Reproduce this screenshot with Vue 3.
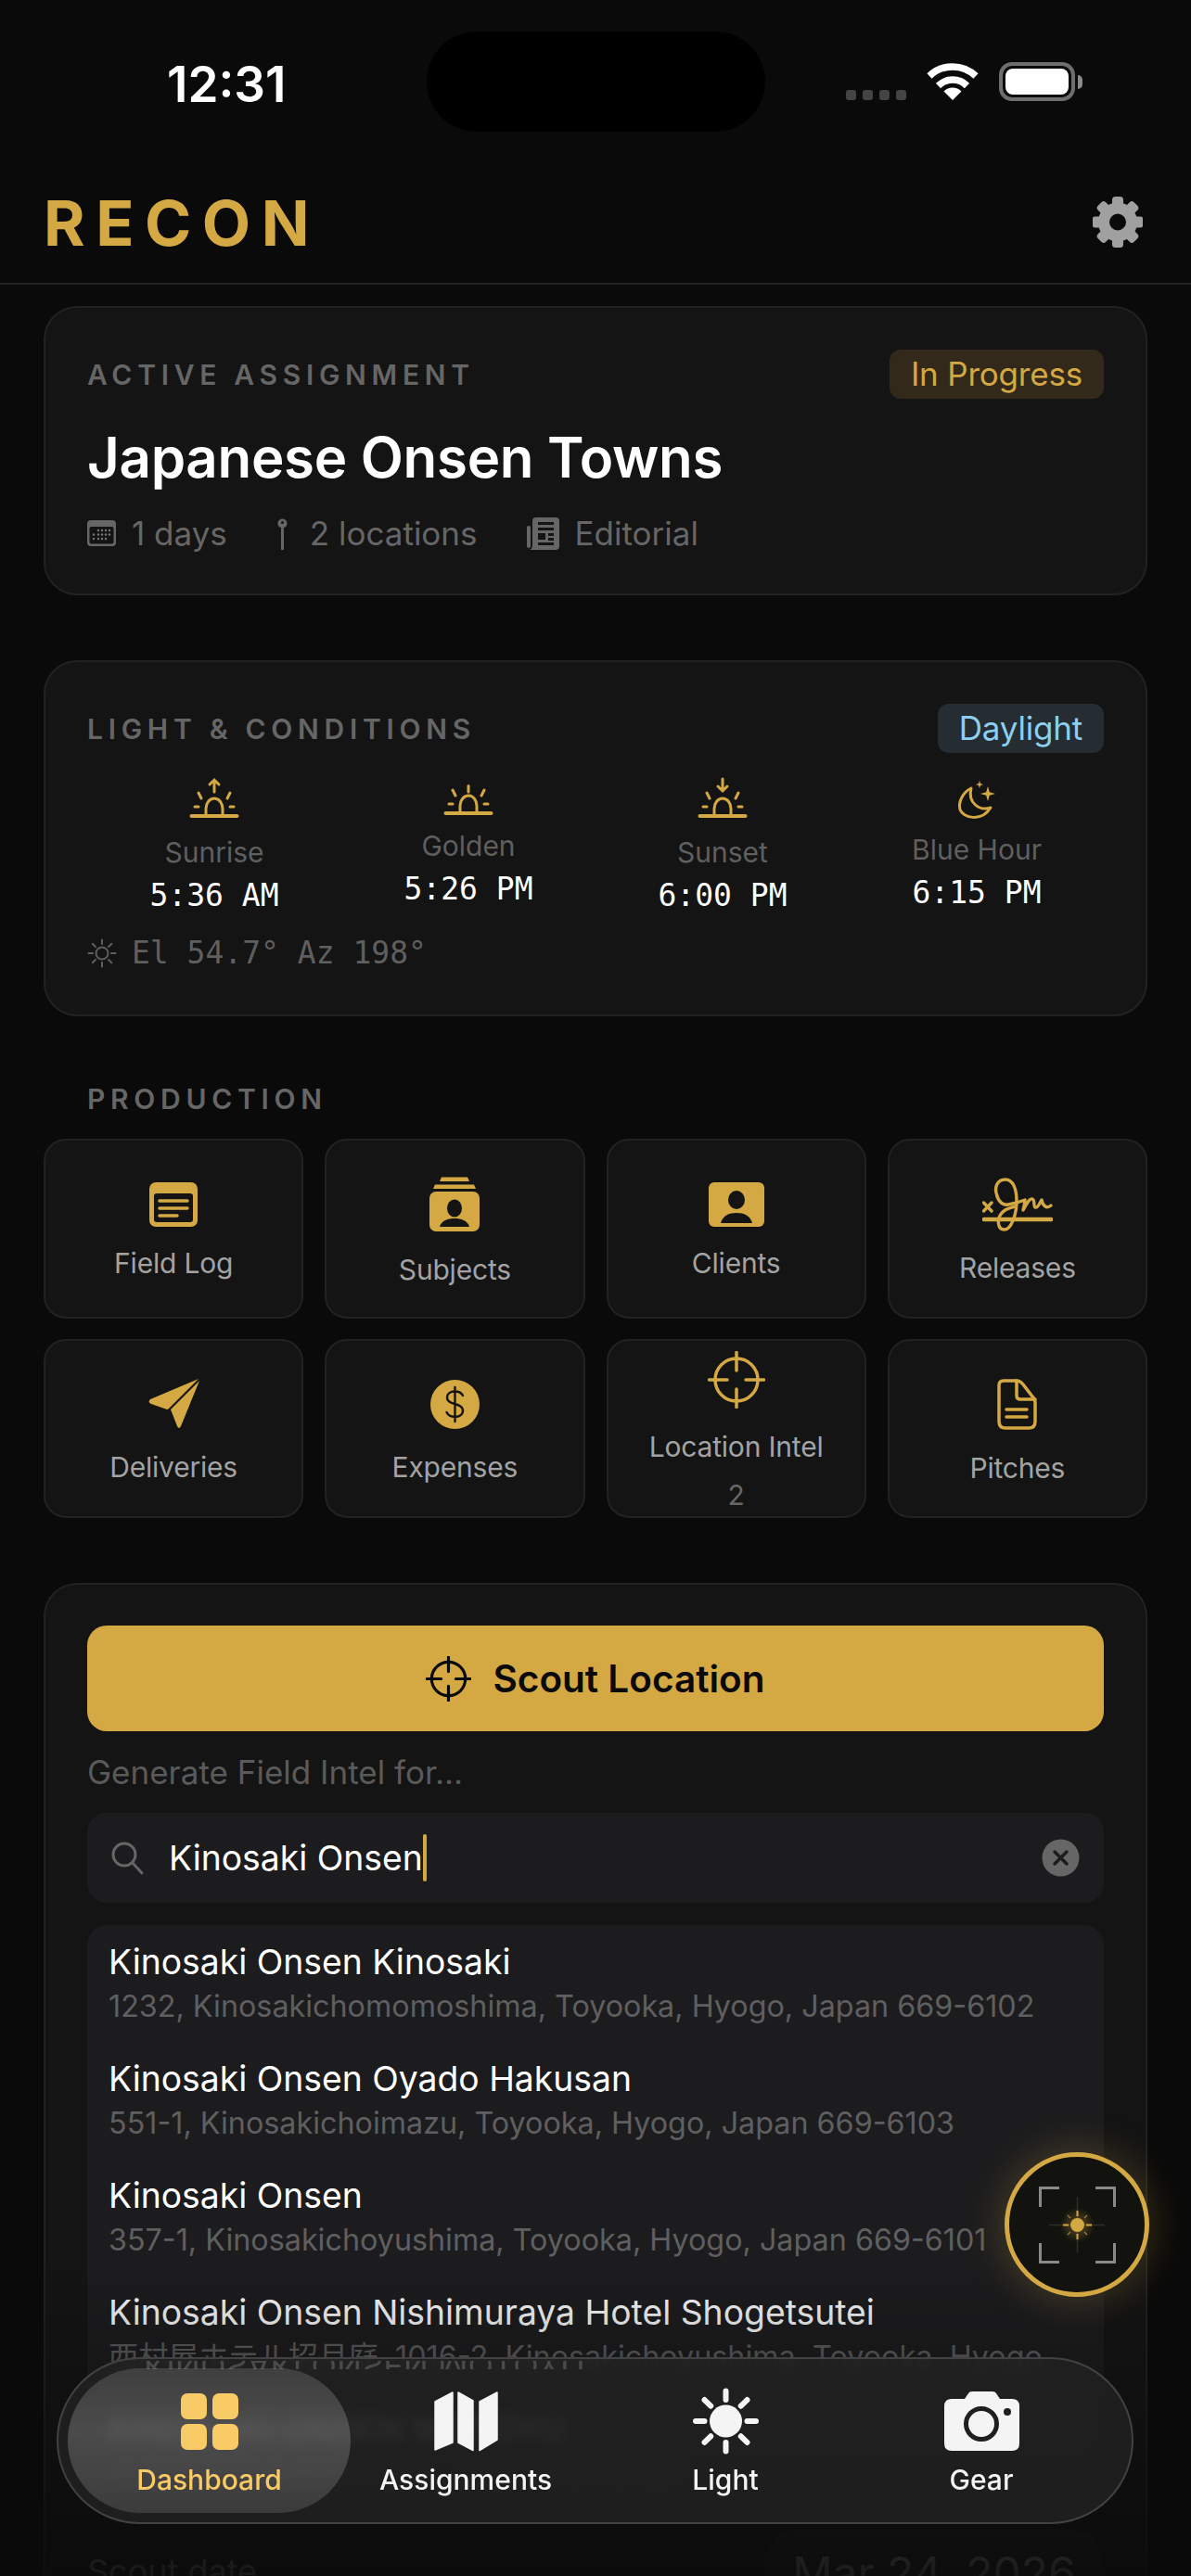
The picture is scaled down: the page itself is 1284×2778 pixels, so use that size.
<script setup>
const sunTimes = [
  { label: 'Sunrise', time: '5:36 AM', kind: 'rise' },
  { label: 'Golden', time: '5:26 PM', kind: 'golden' },
  { label: 'Sunset', time: '6:00 PM', kind: 'set' },
  { label: 'Blue Hour', time: '6:15 PM', kind: 'blue' }
]

// h is the height of the icon slot, labels sit right under it
const tiles = [
  { label: 'Field Log', icon: 'log', h: 58 },
  { label: 'Subjects', icon: 'subjects', h: 72 },
  { label: 'Clients', icon: 'clients', h: 58 },
  { label: 'Releases', icon: 'releases', h: 68 },
  { label: 'Deliveries', icon: 'plane', h: 67 },
  { label: 'Expenses', icon: 'dollar', h: 67 },
  { label: 'Location Intel', icon: 'target', h: 75, count: 2 },
  { label: 'Pitches', icon: 'doc', h: 69 }
]

const places = [
  { name: 'Kinosaki Onsen Kinosaki', addr: '1232, Kinosakichomomoshima, Toyooka, Hyogo, Japan 669-6102' },
  { name: 'Kinosaki Onsen Oyado Hakusan', addr: '551-1, Kinosakichoimazu, Toyooka, Hyogo, Japan 669-6103' },
  { name: 'Kinosaki Onsen', addr: '357-1, Kinosakichoyushima, Toyooka, Hyogo, Japan 669-6101' },
  { name: 'Kinosaki Onsen Nishimuraya Hotel Shogetsutei', addr: '西村屋ホテル招月庭, 1016-2, Kinosakichoyushima, Toyooka, Hyogo' },
  { name: 'KINOSAKI ONSEN MOTOYU', addr: '兵庫県豊岡市城崎町湯島, Toyooka, Hyogo' }
]

const gearTeeth = [0, 45, 90, 135, 180, 225, 270, 315]
const sunRays = [0, 45, 90, 135, 180, 225, 270, 315]
</script>

<template>
  <div class="screen">
    <div class="status-bar">
      <span class="clock">12:31</span>
      <div class="island"></div>
      <div class="signal">
        <i></i><i></i><i></i><i></i>
      </div>
      <svg class="wifi" width="56" height="41" viewBox="0 0 56 41">
        <path d="M3 15 A36 36 0 0 1 53 15" fill="none" stroke="#fff" stroke-width="7.5" />
        <path d="M12.5 25.5 A22 22 0 0 1 43.5 25.5" fill="none" stroke="#fff" stroke-width="7.5" />
        <path d="M28 41 L18.5 31.5 A13.5 13.5 0 0 1 37.5 31.5 Z" fill="#fff" />
      </svg>
      <div class="battery"><div class="battery-fill"></div></div>
      <div class="battery-cap"></div>
    </div>

    <header class="top-bar">
      <h1 class="logo">RECON</h1>
      <svg width="54" height="55" viewBox="0 0 54 55">
        <g fill="#a0a0a0">
          <rect v-for="a in gearTeeth" :key="a" x="21" y="0" width="12" height="14" rx="3.5" :transform="`rotate(${a} 27 27.5)`" />
        </g>
        <circle cx="27" cy="27.5" r="15" fill="none" stroke="#a0a0a0" stroke-width="12" />
      </svg>
    </header>

    <main class="content">
      <section class="card assignment">
        <div class="card-head">
          <span class="section-label">ACTIVE ASSIGNMENT</span>
          <span class="badge badge-gold">In Progress</span>
        </div>
        <h2 class="title">Japanese Onsen Towns</h2>
        <div class="meta">
          <span class="meta-item">
            <svg width="31" height="28" viewBox="0 0 31 28">
              <rect x="0" y="0" width="31" height="28" rx="4" fill="#666" />
              <rect x="2.5" y="7" width="26" height="18.5" rx="2" fill="#141414" />
              <g fill="#777">
                <circle v-for="x in [12, 16, 20, 24]" :key="'a' + x" :cx="x" cy="11" r="1.2" />
                <circle v-for="x in [7, 12, 16, 20, 24]" :key="'b' + x" :cx="x" cy="15.5" r="1.2" />
                <circle v-for="x in [7, 12, 16, 20]" :key="'c' + x" :cx="x" cy="20" r="1.2" />
              </g>
            </svg>
            1 days
          </span>
          <span class="meta-item">
            <svg class="pin" width="13" height="35" viewBox="0 0 13 35">
              <circle cx="6.5" cy="6.5" r="5" fill="#666" />
              <circle cx="6.5" cy="5.5" r="1.5" fill="#141414" />
              <path d="M6.5 12 V34" stroke="#666" stroke-width="3" stroke-linecap="round" />
            </svg>
            2 locations
          </span>
          <span class="meta-item">
            <svg width="35" height="35" viewBox="0 0 35 35">
              <rect x="0" y="9" width="4" height="24" rx="2" fill="#666" />
              <path d="M6 4 Q6 0 10 0 H31 Q35 0 35 4 V31 Q35 35 31 35 H3 Q6 34 6 30 Z" fill="#666" />
              <g fill="#141414">
                <rect x="12" y="5" width="17" height="3" />
                <rect x="12" y="11" width="17" height="3" />
                <rect x="12" y="17" width="8" height="7" />
                <rect x="23" y="17" width="6" height="3" />
                <rect x="23" y="22" width="6" height="3" />
                <rect x="12" y="27" width="17" height="3" />
              </g>
            </svg>
            Editorial
          </span>
        </div>
      </section>

      <section class="card light">
        <div class="card-head">
          <span class="section-label">LIGHT &amp; CONDITIONS</span>
          <span class="badge badge-blue">Daylight</span>
        </div>
        <div class="sun-grid">
          <div v-for="s in sunTimes" :key="s.label" class="sun-col">
            <svg v-if="s.kind === 'rise' || s.kind === 'set'" class="sun-icon tall" width="52" height="44" viewBox="0 0 52 44" fill="none" stroke="#d4a843" stroke-width="3" stroke-linecap="round">
              <path d="M1.5 41 H50.5" stroke-width="4" />
              <path d="M17 39 V33 A9 11 0 0 1 35 33 V39" />
              <path d="M5 31 H9 M43 31 H47 M9 16 L12 22 M43 16 L40 22" />
              <path v-if="s.kind === 'rise'" d="M26 2 V15 M21 7 L26 2 L31 7" />
              <path v-else d="M26 1 V14 M21 9 L26 14 L31 9" />
            </svg>
            <svg v-else-if="s.kind === 'golden'" class="sun-icon short" width="52" height="34" viewBox="0 0 52 34" fill="none" stroke="#d4a843" stroke-width="3" stroke-linecap="round">
              <path d="M1.5 31 H50.5" stroke-width="4" />
              <path d="M17 29 V23 A9 11 0 0 1 35 23 V29" />
              <path d="M5 21 H9 M43 21 H47 M9 6 L12 12 M43 6 L40 12 M26 1.5 V8" />
            </svg>
            <svg v-else class="sun-icon mid" width="40" height="41" viewBox="0 0 40 41" fill="none" stroke="#d4a843" stroke-width="3" stroke-linejoin="round">
              <path d="M14 8 C4 13 0 24 2 31 C5 40 25 45 35 29 C23 33 10 24 14 8 Z" />
              <path d="M32 6 L33.8 12.2 L40 14 L33.8 15.800 L32 22 L30.2 15.800 L24 14 L30.2 12.2 Z" fill="#d4a843" stroke="none" />
              <path d="M23 0 L24 3 L27 4 L24 5 L23 8 L22 5 L19 4 L22 3 Z" fill="#d4a843" stroke="none" />
            </svg>
            <span class="sun-label">{{ s.label }}</span>
            <span class="sun-time">{{ s.time }}</span>
          </div>
        </div>
        <div class="sun-pos">
          <svg width="32" height="32" viewBox="0 0 32 32" fill="none" stroke="#5f5f5f" stroke-width="2" stroke-linecap="round">
            <circle cx="16" cy="16" r="6.5" />
            <path v-for="a in sunRays" :key="a" d="M16 1.5 V6" :transform="`rotate(${a} 16 16)`" />
          </svg>
          <span>El 54.7° Az 198°</span>
        </div>
      </section>

      <div class="production-label section-label">PRODUCTION</div>
      <div class="tile-grid">
        <div v-for="t in tiles" :key="t.label" class="tile">
          <div class="tile-icon" :style="{ height: t.h + 'px' }">
            <svg v-if="t.icon === 'log'" width="52" height="48" viewBox="0 0 52 48">
              <rect width="52" height="48" rx="7" fill="#d4a843" />
              <rect x="5" y="12" width="42" height="31" rx="3" fill="#141414" />
              <path d="M11 20 H41 M11 28 H41 M11 36 H30" stroke="#d4a843" stroke-width="3.5" stroke-linecap="round" />
            </svg>
            <svg v-else-if="t.icon === 'subjects'" width="54" height="59" viewBox="0 0 54 59">
              <path d="M13 0.5 H41 L43 5 H11 Z M6 8.5 H48 L50 13 H4 Z" fill="#d4a843" />
              <rect y="16" width="54" height="43" rx="7" fill="#d4a843" />
              <ellipse cx="27" cy="34" rx="8" ry="9.5" fill="#141414" />
              <path d="M11 54 C13 47 20 45 27 45 C34 45 41 47 43 54 Z" fill="#141414" />
            </svg>
            <svg v-else-if="t.icon === 'clients'" width="60" height="48" viewBox="0 0 60 48">
              <rect width="60" height="48" rx="6" fill="#d4a843" />
              <ellipse cx="30" cy="19" rx="9" ry="10" fill="#141414" />
              <path d="M13 44 C15 36 22 33 30 33 C38 33 45 36 47 44 Z" fill="#141414" />
            </svg>
            <svg v-else-if="t.icon === 'releases'" width="76" height="58" viewBox="0 0 76 58" fill="none" stroke="#d4a843" stroke-width="3.4" stroke-linecap="round" stroke-linejoin="round">
              <path d="M1.5 45 H74.5" stroke-width="4.500" />
              <path d="M1.5 27 L10 36 M10 27 L1.5 36" />
              <path d="M16 20 C12 9 17 2 25 2 C33 2 37 12 37 25 C37 40 31 56 24 56 C16 56 15 44 22 37 C27 32 31 33 35 31" />
              <path d="M16 20 C18 27 23 30 28 29 C34 28 41 26 46 24 C46 29 44 33 44 35 C48 28 51 22 54 23 C57 24 55 31 57 32 C60 33 62 27 64 24 C65 30 69 34 74 30" />
            </svg>
            <svg v-else-if="t.icon === 'plane'" width="55" height="54" viewBox="0 0 55 54" fill="#d4a843">
              <path d="M54 0 L2 22 Q-1 25 3 27 L20 33 Q21 33 22 32 Z" />
              <path d="M55 2 L24 33 L31 51 Q33 55 35 51 Z" />
            </svg>
            <svg v-else-if="t.icon === 'dollar'" width="53" height="53" viewBox="0 0 53 53">
              <circle cx="26.5" cy="26.5" r="26.5" fill="#d4a843" />
              <path d="M35 17 C33 13 29 12.500 26.500 12.500 C21 12.500 18 15.500 18 19 C18 28 35 24 35 33.500 C35 37.500 31 40 26.500 40 C22 40 19 38 17.500 35 M26.500 8 V45" fill="none" stroke="#141414" stroke-width="2.400" stroke-linecap="round" />
            </svg>
            <svg v-else-if="t.icon === 'target'" width="62" height="62" viewBox="0 0 62 62" fill="none" stroke="#d4a843" stroke-linecap="round">
              <circle cx="31" cy="31" r="23" stroke-width="3.500" />
              <path d="M31 1.500 V21 M31 41 V60.500 M1.500 31 H21 M41 31 H60.500" stroke-width="3.500" />
            </svg>
            <svg v-else width="43" height="55" viewBox="0 0 43 55" fill="none" stroke="#d4a843" stroke-width="3.500" stroke-linejoin="round" stroke-linecap="round">
              <path d="M7 2 H21 Q25 2 28 6 L38 19 Q41 22 41 26 V46 Q41 53 34 53 H9 Q2 53 2 46 V7 Q2 2 7 2 Z" />
              <path d="M21 2 V18 Q21 22 25 22 H41" />
              <path d="M10 33 H32 M10 41 H32" />
            </svg>
          </div>
          <span class="tile-label">{{ t.label }}</span>
          <span v-if="t.count" class="tile-count">{{ t.count }}</span>
        </div>
      </div>

      <section class="card scout">
        <button class="scout-btn">
          <svg width="49" height="49" viewBox="0 0 62 62" fill="none" stroke="#0a0a0a" stroke-linecap="round">
            <circle cx="31" cy="31" r="23" stroke-width="4" />
            <path d="M31 1.500 V21 M31 41 V60.500 M1.500 31 H21 M41 31 H60.500" stroke-width="4" />
          </svg>
          Scout Location
        </button>
        <div class="hint">Generate Field Intel for...</div>
        <div class="search">
          <svg width="35" height="36" viewBox="0 0 35 36" fill="none" stroke="#666" stroke-width="3" stroke-linecap="round">
            <circle cx="14" cy="14" r="12" />
            <path d="M23 23 L33 34" />
          </svg>
          <span class="search-text">Kinosaki Onsen</span>
          <i class="caret"></i>
          <svg class="clear" width="41" height="41" viewBox="0 0 41 41">
            <circle cx="20.500" cy="20.500" r="20" fill="#666" />
            <path d="M14 14 L27 27 M27 14 L14 27" stroke="#1c1c1e" stroke-width="3.500" stroke-linecap="round" />
          </svg>
        </div>
        <ul class="results">
          <li v-for="p in places" :key="p.name" class="result">
            <div class="result-name">{{ p.name }}</div>
            <div class="result-addr">{{ p.addr }}</div>
          </li>
        </ul>
        <div class="date-row">
          <span class="date-label">Scout date</span>
          <span class="date-pill">Mar 24, 2026</span>
        </div>
      </section>
    </main>

    <div class="bottom-fade"></div>

    <button class="fab">
      <svg width="83" height="83" viewBox="0 0 83 83" fill="none">
        <defs>
          <radialGradient id="sun-glow">
            <stop offset="0" stop-color="#d4a843" stop-opacity="0.4" />
            <stop offset="1" stop-color="#d4a843" stop-opacity="0" />
          </radialGradient>
        </defs>
        <path d="M1.500 22 V1.500 H22 M61 1.500 H81.500 V22 M1.500 61 V81.500 H22 M61 81.500 H81.500 V61" stroke="#8a8a8a" stroke-width="3" />
        <path d="M41.500 11 V71 M11 41.500 H71" stroke="#2e2e2a" stroke-width="1.500" />
        <circle cx="41.500" cy="41.500" r="19" fill="url(#sun-glow)" />
        <circle cx="41.500" cy="41.500" r="7.500" fill="#d4a843" />
        <path d="M41.500 26 V32 M41.500 51 V57 M26 41.500 H32 M51 41.500 H57" stroke="#d4a843" stroke-width="2" />
        <path d="M31 31 L34 34 M52 31 L49 34 M31 52 L34 49 M52 52 L49 49" stroke="#a08238" stroke-width="1.200" />
      </svg>
    </button>

    <nav class="tab-bar">
      <div class="bar-sheen"><span>KINOSAKI ONSEN MOTOYU</span></div>
      <div class="tab active">
        <svg width="62" height="72" viewBox="0 0 62 72" fill="#f9cb66">
          <rect x="0" y="6" width="28" height="28" rx="7" />
          <rect x="34" y="6" width="28" height="28" rx="7" />
          <rect x="0" y="39" width="28" height="28" rx="7" />
          <rect x="34" y="39" width="28" height="28" rx="7" />
        </svg>
        <span>Dashboard</span>
      </div>
      <div class="tab">
        <svg width="69" height="72" viewBox="0 -4 69 72" fill="#f4f4f5" stroke="#f4f4f5" stroke-width="1.500" stroke-linejoin="round">
          <path d="M1 11 L20 1 V55 L1 63 Z" />
          <path d="M26 1 L42 10 V63.500 L26 55 Z" />
          <path d="M49 11 L68 1 V52 L49 63.500 Z" />
        </svg>
        <span>Assignments</span>
      </div>
      <div class="tab">
        <svg width="73" height="72" viewBox="0 0 73 72" fill="#f4f4f5">
          <circle cx="36.500" cy="36" r="17.500" />
          <g stroke="#f4f4f5" stroke-width="6" stroke-linecap="round">
            <path v-for="a in sunRays" :key="a" d="M36.500 3.500 V13" :transform="`rotate(${a} 36.500 36)`" />
          </g>
        </svg>
        <span>Light</span>
      </div>
      <div class="tab">
        <svg width="81" height="72" viewBox="0 -4 81 72">
          <path d="M8 8 H22 L26 2 Q27 0 30 0 H52 Q55 0 56 2 L60 8 H73 Q81 8 81 16 V56 Q81 64 73 64 H8 Q0 64 0 56 V16 Q0 8 8 8 Z" fill="#f4f4f5" />
          <circle cx="40" cy="35" r="16.500" fill="#f4f4f5" stroke="#1f1f1f" stroke-width="5" />
          <circle cx="68" cy="22" r="4" fill="#1f1f1f" />
        </svg>
        <span>Gear</span>
      </div>
    </nav>
  </div>
</template>

<style>
html,
body {
  margin: 0;
  background: #0a0a0a;
}
</style>

<style scoped>
* {
  box-sizing: border-box;
}
.screen {
  position: relative;
  width: 1284px;
  height: 2778px;
  overflow: hidden;
  background: #0a0a0a;
  color: #fff;
  font-family: Inter, 'Noto Sans CJK JP', sans-serif;
}

/* status bar */
.status-bar {
  display: flex;
  align-items: flex-start;
  height: 172px;
  padding: 34px 0 0 180px;
}
.clock {
  width: 126px;
  margin-top: 27px;
  font-size: 53px;
  line-height: 60px;
  font-weight: 600;
  white-space: nowrap;
}
.island {
  width: 365px;
  height: 108px;
  margin-left: 154px;
  border-radius: 54px;
  background: #000;
}
.signal {
  display: flex;
  gap: 7px;
  margin: 63px 0 0 87px;
}
.signal i {
  width: 11px;
  height: 11px;
  border-radius: 3px;
  background: #444;
}
.wifi {
  margin: 33px 0 0 22px;
}
.battery {
  width: 82px;
  height: 42px;
  margin: 33px 0 0 22px;
  padding: 3px;
  border: 4px solid #6e6e6e;
  border-radius: 14px;
}
.battery-fill {
  height: 100%;
  border-radius: 8px;
  background: #fff;
}
.battery-cap {
  width: 5px;
  height: 15px;
  margin: 47px 0 0 3px;
  border-radius: 0 5px 5px 0;
  background: #8a8a8a;
}

.top-bar {
  display: flex;
  justify-content: space-between;
  align-items: center;
  height: 135px;
  padding: 2px 52px 0 47px;
  border-bottom: 2px solid #222;
}
.logo {
  margin: 0;
  font-size: 68px;
  line-height: 80px;
  font-weight: 700;
  letter-spacing: 11.500px;
  color: #d4a843;
}

.content {
  padding: 23px 47px 0;
}
.card {
  border: 2px solid #222;
  border-radius: 36px;
  background: #141414;
}
.card-head {
  display: flex;
  justify-content: space-between;
  align-items: center;
}
.section-label {
  font-size: 30px;
  line-height: 38px;
  font-weight: 600;
  letter-spacing: 5.700px;
  color: #666;
}
.badge {
  height: 53px;
  padding: 0 23px;
  border-radius: 12px;
  font-size: 35px;
  line-height: 53px;
  letter-spacing: -0.200px;
}
.badge-gold {
  background: #33291a;
  color: #d4a843;
}
.badge-blue {
  background: #252d33;
  color: #8ccfee;
}

.assignment {
  height: 312px;
  padding: 45px 45px 0;
}
.title {
  margin: 27px 0 0;
  font-size: 60px;
  line-height: 72px;
  font-weight: 600;
  letter-spacing: -0.300px;
}
.meta {
  display: flex;
  gap: 53px;
  margin-top: 24px;
  font-size: 35px;
  line-height: 44px;
  color: #666;
}
.meta-item {
  display: flex;
  align-items: center;
  gap: 17px;
}
.pin {
  margin-right: 6px;
}

.light {
  height: 384px;
  margin-top: 70px;
  padding: 45px 45px 0;
}
.sun-grid {
  display: grid;
  grid-template-columns: repeat(4, 1fr);
  align-items: center;
  margin-top: 27px;
}
.sun-col {
  display: flex;
  flex-direction: column;
  align-items: center;
}
.sun-icon {
  overflow: visible;
}
.sun-icon.short {
  margin-bottom: -4px;
}
.sun-icon.mid {
  margin-bottom: -3px;
}
.sun-label {
  margin-top: 18px;
  font-size: 30px;
  line-height: 36px;
  color: #5f5f5f;
}
.sun-time {
  margin-top: 7px;
  font-family: 'DejaVu Sans Mono', monospace;
  font-size: 33px;
  line-height: 44px;
}
.sun-pos {
  display: flex;
  align-items: center;
  gap: 16px;
  margin-top: 20px;
  font-family: 'DejaVu Sans Mono', monospace;
  font-size: 33px;
  line-height: 40px;
  color: #5f5f5f;
}

.production-label {
  margin: 70px 0 24px 47px;
}
.tile-grid {
  display: grid;
  grid-template-columns: repeat(4, 1fr);
  grid-auto-rows: 193.500px;
  gap: 22px 23px;
}
.tile {
  display: flex;
  flex-direction: column;
  align-items: center;
  justify-content: center;
  border: 2px solid #222;
  border-radius: 24px;
  background: #141414;
}
.tile-icon {
  display: flex;
  align-items: center;
}
.tile-label {
  margin-top: 16px;
  font-size: 30px;
  line-height: 36px;
  letter-spacing: -0.200px;
  color: #a3a3a3;
}
.tile-count {
  margin-top: 16px;
  font-size: 30px;
  line-height: 36px;
  color: #666;
}

.scout {
  margin-top: 70px;
  padding: 44px 45px 0;
  border-bottom: 0;
}
.scout-btn {
  display: flex;
  justify-content: center;
  align-items: center;
  gap: 23px;
  width: 100%;
  height: 114px;
  border: 0;
  border-radius: 21px;
  background: #d4a843;
  color: #0a0a0a;
  font-family: inherit;
  font-size: 40.500px;
  font-weight: 600;
}
.hint {
  margin-top: 24px;
  font-size: 35px;
  line-height: 40px;
  color: #5a5a5a;
}
.search {
  display: flex;
  align-items: center;
  height: 97px;
  margin-top: 24px;
  padding: 0 26px;
  border-radius: 21px;
  background: #1c1c1e;
}
.search-text {
  margin-left: 27px;
  font-size: 37.300px;
  line-height: 44px;
}
.caret {
  width: 4px;
  height: 51px;
  border-radius: 2px;
  background: #d4a843;
}
.clear {
  margin-left: auto;
}
.results {
  margin: 24px 0 0;
  padding: 0;
  list-style: none;
  border-radius: 21px;
  background: #1c1c1e;
}
.result {
  height: 126px;
  padding: 17px 23px 0;
}
.result-name {
  font-size: 37.300px;
  line-height: 46px;
  white-space: nowrap;
}
.result-addr {
  margin-top: 5px;
  font-size: 32.300px;
  line-height: 40px;
  color: #5f5f5f;
  white-space: nowrap;
}
.date-row {
  display: flex;
  justify-content: space-between;
  margin-top: 21px;
}
.date-label {
  margin-top: 24px;
  font-size: 36px;
  color: #666;
}
.date-pill {
  width: 366px;
  height: 100px;
  padding-top: 18px;
  border-radius: 40px;
  background: #1c1c1e;
  text-align: center;
  font-size: 48px;
  line-height: 60px;
  color: #777;
}

/* things that float over the scrolling content */
.bottom-fade {
  position: absolute;
  left: 0;
  right: 0;
  bottom: 0;
  height: 340px;
  background: linear-gradient(rgba(10, 10, 10, 0), rgba(10, 10, 10, 0.85));
}
.fab {
  position: absolute;
  right: 45px;
  bottom: 301px;
  display: flex;
  align-items: center;
  justify-content: center;
  width: 156px;
  height: 156px;
  padding: 0;
  border: 5px solid #d4a843;
  border-radius: 50%;
  background: #12120e;
  box-shadow: 0 0 44px rgba(212, 168, 67, 0.28);
}
.tab-bar {
  position: absolute;
  left: 61px;
  bottom: 56px;
  display: grid;
  grid-template-columns: 305px 248px 312px 240px;
  width: 1161px;
  height: 180px;
  padding: 10px;
  border: 2px solid #424242;
  border-radius: 90px;
  background: rgba(33, 33, 33, 0.84);
  backdrop-filter: blur(7px);
  overflow: hidden;
}
.bar-sheen {
  position: absolute;
  top: 2px;
  left: 92px;
  height: 9px;
  overflow: hidden;
  font-size: 36px;
  line-height: 9px;
  color: #4a4a4a;
  white-space: nowrap;
}
.bar-sheen span {
  display: block;
  transform: scaleY(-1);
}
.tab {
  position: relative;
  display: flex;
  flex-direction: column;
  align-items: center;
  height: 156px;
  padding-top: 21px;
  border-radius: 78px;
  font-size: 30px;
  line-height: 36px;
  font-weight: 500;
  color: #f4f4f5;
}
.tab span {
  margin-top: 9px;
}
.tab.active {
  background: linear-gradient(rgba(255, 255, 255, 0.14), rgba(255, 255, 255, 0.2) 45%, rgba(255, 255, 255, 0.13));
  color: #f9cb66;
}
</style>
